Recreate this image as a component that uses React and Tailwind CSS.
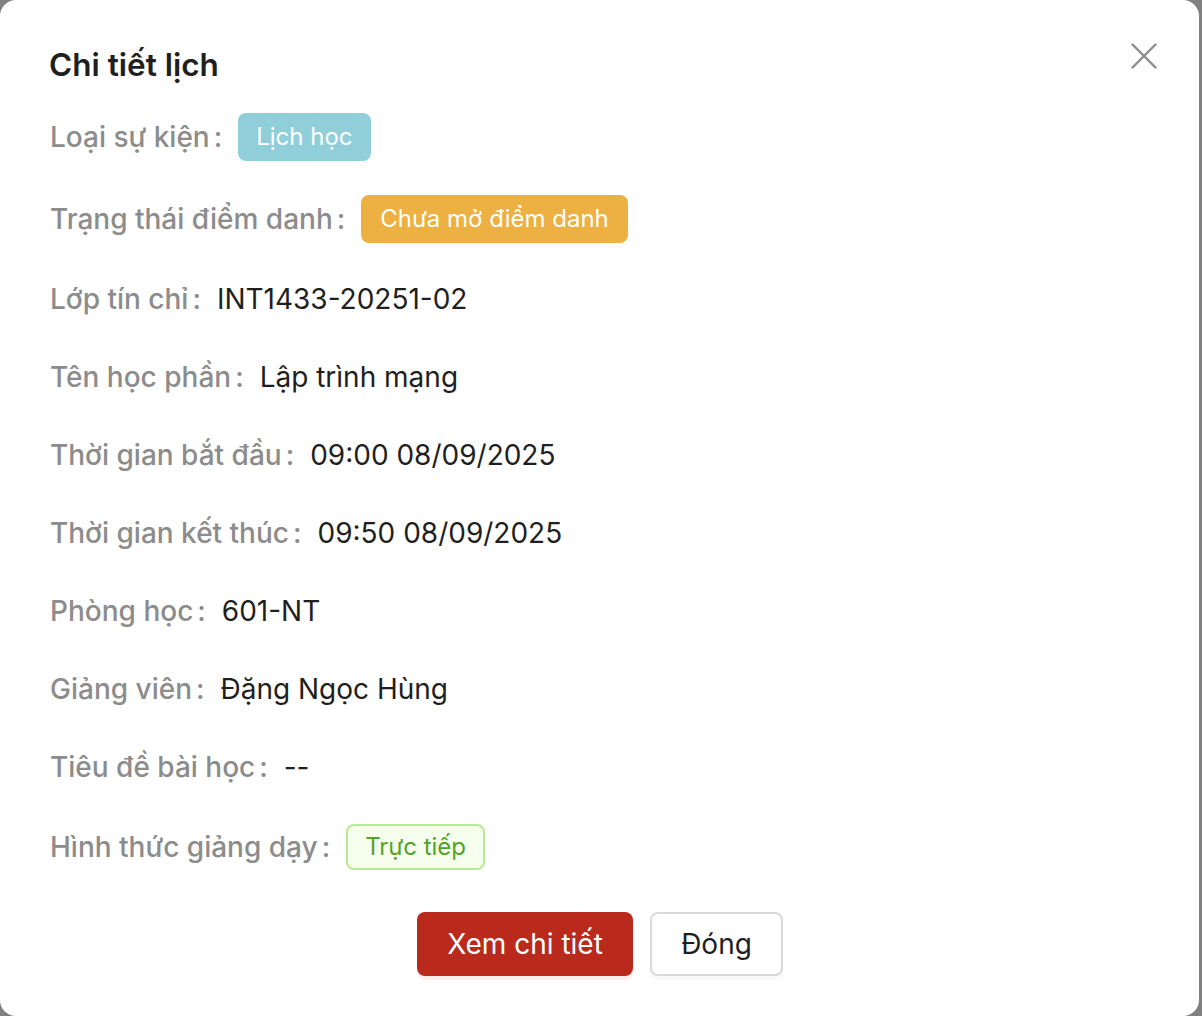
import React from 'react';

const font = { fontFamily: 'Inter, "Noto Sans", sans-serif' };

const rows = [
  { label: 'Loại sự kiện', tag: 'Lịch học', kind: 'teal' },
  { label: 'Trạng thái điểm danh', tag: 'Chưa mở điểm danh', kind: 'orange' },
  { label: 'Lớp tín chỉ', value: 'INT1433-20251-02' },
  { label: 'Tên học phần', value: 'Lập trình mạng' },
  { label: 'Thời gian bắt đầu', value: '09:00 08/09/2025' },
  { label: 'Thời gian kết thúc', value: '09:50 08/09/2025' },
  { label: 'Phòng học', value: '601-NT' },
  { label: 'Giảng viên', value: 'Đặng Ngọc Hùng' },
  { label: 'Tiêu đề bài học', value: '--' },
  { label: 'Hình thức giảng dạy', tag: 'Trực tiếp', kind: 'green' },
];

const tagClass = {
  teal: 'h-[48px] px-[18px] rounded-[8px] bg-[#90cfd9] text-white',
  orange: 'h-[48px] px-[19px] rounded-[8px] bg-[#edb042] text-white',
  green: 'h-[46px] px-[17px] rounded-[8px] bg-[#f6ffed] border-2 border-[#b7eb8f] text-[#52a32a]',
};

const Row = ({ row }) => (
  <div className={`flex items-center ${row.tag ? 'h-[50px]' : 'h-[46px]'}`}>
    <span className="text-[28px] font-medium text-[#8c8c8c]">{row.label}</span>
    <span className="text-[28px] font-medium text-[#8c8c8c] ml-[4px] mr-[16px]">:</span>
    {row.tag ? (
      <span className={`inline-flex items-center text-[24px] ${tagClass[row.kind]}`}>{row.tag}</span>
    ) : (
      <span className="text-[28px] text-[#1f1f1f]">{row.value}</span>
    )}
  </div>
);

export default function App() {
  return (
    <div className="w-[1202px] h-[1016px] bg-[#808080] flex" style={font}>
      <div className="w-[1199px] h-[1016px] bg-white rounded-[16px] flex flex-col pl-[50px] pr-[42px] pt-[44px]">
        <div className="flex items-start justify-between">
          <h2 className="text-[31.5px] font-semibold text-[#1f1f1f] leading-[42px] -ml-[1px]">Chi tiết lịch</h2>
          <button className="mt-[-1px] w-[26px] h-[26px] flex items-center justify-center">
            <svg width="26" height="26" viewBox="0 0 26 26" fill="none" stroke="#8c8c8c" strokeWidth="2.4" strokeLinecap="round">
              <path d="M1.5 1.5 L24.5 24.5 M24.5 1.5 L1.5 24.5" />
            </svg>
          </button>
        </div>
        <div className="flex flex-col gap-[32px] mt-[26px]">
          {rows.map((r) => (
            <Row key={r.label} row={r} />
          ))}
        </div>
        <div className="flex justify-center gap-[17px] mt-[40px] pr-[7px]">
          <button className="h-[64px] w-[216px] rounded-[8px] bg-[#b9291c] text-white text-[28px] shadow-[0_4px_0_rgba(255,38,5,0.08)]">
            Xem chi tiết
          </button>
          <button className="h-[64px] w-[133px] rounded-[8px] bg-white border-2 border-[#d9d9d9] text-[#1f1f1f] text-[28px] shadow-[0_4px_0_rgba(0,0,0,0.02)]">
            Đóng
          </button>
        </div>
      </div>
    </div>
  );
}
